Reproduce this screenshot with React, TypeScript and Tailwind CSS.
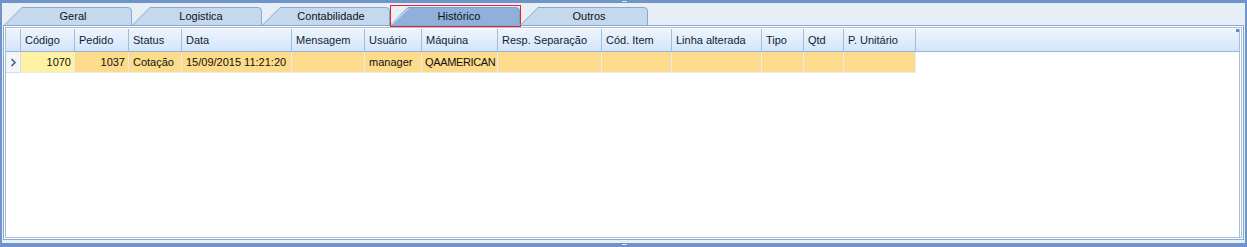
import React from "react";

type Tab = { label: string; w: number; wc: string; sel?: boolean };

const tabs: Tab[] = [
  { label: "Geral", w: 128, wc: "w-[128px]" },
  { label: "Logistica", w: 130, wc: "w-[130px]" },
  { label: "Contabilidade", w: 128, wc: "w-[128px]" },
  { label: "Histórico", w: 130, wc: "w-[130px]", sel: true },
  { label: "Outros", w: 128, wc: "w-[128px]" },
];

type Col = { label: string; wc: string; value: string; right?: boolean; cellBg?: string; tight?: boolean };

const cols: Col[] = [
  { label: "Código", wc: "w-[54px]", value: "1070", right: true, cellBg: "bg-[#fff1a3]" },
  { label: "Pedido", wc: "w-[54px]", value: "1037", right: true },
  { label: "Status", wc: "w-[53px]", value: "Cotação" },
  { label: "Data", wc: "w-[110px]", value: "15/09/2015 11:21:20" },
  { label: "Mensagem", wc: "w-[73px]", value: "" },
  { label: "Usuário", wc: "w-[57px]", value: "manager" },
  { label: "Máquina", wc: "w-[76px]", value: "QAAMERICAN", tight: true },
  { label: "Resp. Separação", wc: "w-[104px]", value: "" },
  { label: "Cód. Item", wc: "w-[70px]", value: "" },
  { label: "Linha alterada", wc: "w-[90px]", value: "" },
  { label: "Tipo", wc: "w-[42px]", value: "" },
  { label: "Qtd", wc: "w-[40px]", value: "" },
  { label: "P. Unitário", wc: "w-[72px]", value: "" },
];

function TabItem({ t }: { t: Tab }) {
  const W = t.w;
  const H = 18;
  const d = `M0.5 ${H} L${18} 0.5 H${W - 4} Q${W - 0.5} 0.5 ${W - 0.5} 4 V${H}`;
  return (
    <div className={`relative h-[18px] shrink-0 ${t.wc}`}>
      <svg className="absolute inset-0" width={W} height={H} viewBox={`0 0 ${W} ${H}`}>
        <path d={d} fill={t.sel ? "#8fb0da" : "#c5d9ee"} stroke={t.sel ? "#7f9fcb" : "#8aa8cf"} strokeWidth="1" />
        {t.sel && <path d={`M1.5 ${H - 0.5} L18.5 1.5`} stroke="#e6eef8" strokeWidth="1" fill="none" />}
      </svg>
      <div className="relative flex w-[138px] justify-center leading-[18px] text-[#111111] whitespace-nowrap">
        {t.label}
      </div>
      {t.sel && (
        <div className="absolute left-0 top-[-2px] h-[22px] w-[131px] border border-[#e8232d]" />
      )}
    </div>
  );
}

export default function App() {
  return (
    <div className="relative flex h-[247px] w-[1247px] flex-col border-l-2 border-r-2 border-t-[3px] border-b-4 border-[#6f95c8] bg-[#e7eef6] font-['Liberation_Sans',Arial,sans-serif] text-[11px] text-[#141414]">
      <span className="absolute left-[620px] top-[-2px] h-[1px] w-[5px] bg-white/80" />
      <span className="absolute bottom-[-2px] left-[620px] h-[1px] w-[5px] bg-white/80" />
      {/* tab strip */}
      <div className="flex h-[22px] shrink-0 items-end pl-[2px]">
        {tabs.map((t) => (
          <TabItem key={t.label} t={t} />
        ))}
      </div>
      {/* panel */}
      <div className="mx-[1px] mb-[3px] flex flex-1 border border-[#8aa7cf] bg-white p-[1px]">
        <div className="flex flex-1 border border-[#a7bedb] pt-[1px]">
          <div className="mr-[1px] flex flex-1 flex-col border-r border-[#a7bedb]">
            {/* header */}
            <div className="flex h-[23px] border-b border-[#9ab4d4] bg-gradient-to-b from-[#edf5fe] to-[#d4e5fa]">
              <div className="w-[15px] shrink-0 border-r border-[#a3bcda]" />
              {cols.map((c) => (
                <div
                  key={c.label}
                  className={`${c.wc} flex shrink-0 items-center overflow-hidden whitespace-nowrap border-r border-[#a3bcda] pl-[4px] text-[#0f1f33]`}
                >
                  {c.label}
                </div>
              ))}
              <div className="relative flex-1">
                <span className="absolute right-0 top-0 h-[3px] w-[3px] bg-[#6a88b0]" />
              </div>
            </div>
            {/* row */}
            <div className="flex h-[21px]">
              <div className="flex w-[15px] shrink-0 items-center justify-center border-b border-r border-[#d3dfee] bg-[#f2f6fb]">
                <svg width="7" height="9" viewBox="0 0 7 9">
                  <path d="M1.5 1 L5 4.5 L1.5 8" stroke="#46658f" strokeWidth="1.7" fill="none" />
                </svg>
              </div>
              {cols.map((c) => (
                <div
                  key={c.label}
                  className={`${c.wc} flex shrink-0 items-center overflow-hidden whitespace-nowrap border-b border-r border-[#e6e9ee] ${c.cellBg ?? "bg-[#fcdb8a]"} ${c.right ? "justify-end pr-[3px]" : c.tight ? "pl-[3px] tracking-[-0.35px]" : "pl-[4px]"} text-[#111111]`}
                >
                  {c.value}
                </div>
              ))}
              <div className="flex-1" />
            </div>
            <div className="flex-1" />
          </div>
        </div>
      </div>
    </div>
  );
}
